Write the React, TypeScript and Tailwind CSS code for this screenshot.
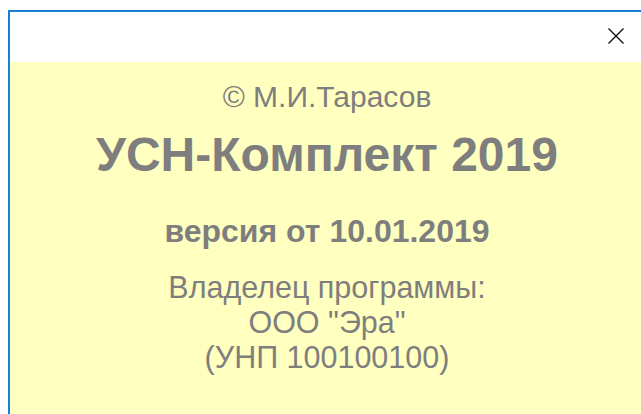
export default function App() {
  return (
    <div className="h-[414px] w-[641px] overflow-hidden bg-white pl-[8px] pt-[10px]">
      <div
        className="flex h-[420px] w-[640px] flex-col border-l-2 border-t-2 border-[#1a7fd4]"
        style={{ fontFamily: '"Liberation Sans", Arial, sans-serif' }}
      >
        {/* title bar with close button */}
        <div className="flex h-[50px] items-start justify-end bg-white pr-[13px] pt-[15px]">
          <svg width="18" height="18" viewBox="0 0 18 18" className="mr-[10px]">
            <path d="M1.5 1.5 L16.5 16.5 M16.5 1.5 L1.5 16.5" stroke="#111" strokeWidth="1.4" fill="none" />
          </svg>
        </div>

        <div className="flex flex-1 flex-col items-center bg-[#ffffc0] pr-[4px] text-[#7e7e7e]">
          <div className="mt-[19px] text-[30px] leading-[32px]">© М.И.Тарасов</div>
          <div className="mt-[15px] text-[48px] font-bold leading-[54px]">УСН-Комплект 2019</div>
          <div className="mt-[30px] text-[32px] font-bold leading-[38px]">версия от 10.01.2019</div>
          <div className="mt-[20px] text-center text-[30.5px] leading-[35px]">
            <div>Владелец программы:</div>
            <div>ООО "Эра"</div>
            <div>(УНП 100100100)</div>
          </div>
        </div>
      </div>
    </div>
  )
}
